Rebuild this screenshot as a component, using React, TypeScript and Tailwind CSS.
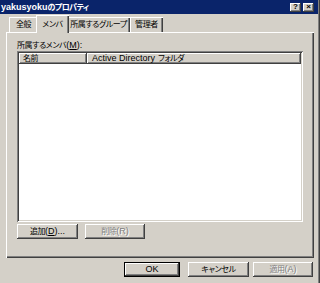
import React from "react";

const raised =
  "shadow-[inset_-1px_-1px_#404040,inset_1px_1px_#ffffff,inset_-2px_-2px_#808080]";

function J({ children, c = "" }: { children: React.ReactNode; c?: string }) {
  return <span className={`text-[8px] tracking-[-0.4px] ${c}`}>{children}</span>;
}

function Btn({ children, disabled, def, w }: { children: React.ReactNode; disabled?: boolean; def?: boolean; w: string }) {
  return (
    <div
      className={`${w} h-[15px] flex items-center justify-center bg-[#d4d0c8] ${
        def
          ? "shadow-[inset_0_0_0_1px_#000000,inset_-2px_-2px_#404040,inset_2px_2px_#ffffff,inset_-3px_-3px_#808080]"
          : raised
      } ${disabled ? "text-[#808080] [text-shadow:1px_1px_0_#ffffff]" : "text-black"}`}
    >
      <span className="leading-none whitespace-nowrap">{children}</span>
    </div>
  );
}

function Tab({ label, active, w }: { label: string; active?: boolean; w: string }) {
  return (
    <div
      className={`${w} flex items-center justify-center bg-[#d4d0c8] whitespace-nowrap ${
        active
          ? "h-[18px] -mx-[2px] z-10 relative shadow-[inset_1px_1px_#ffffff,inset_-1px_0_#404040,inset_-2px_0_#808080] mb-[-1px]"
          : "h-[15px] shadow-[inset_1px_1px_#ffffff,inset_-1px_0_#404040,inset_-2px_0_#808080]"
      }`}
    >
      <span className="leading-none">
        <J>{label}</J>
      </span>
    </div>
  );
}

export default function App() {
  return (
    <div
      className="w-[320px] h-[283px] bg-[#d4d0c8] flex flex-col overflow-hidden text-[9px] text-black shadow-[inset_-1px_0_#404040,inset_-2px_0_#808080] [font-feature-settings:'palt']"
      style={{ fontFamily: '"Liberation Sans", "Noto Sans CJK JP", sans-serif' }}
    >
      {/* title bar */}
      <div className="h-[14px] bg-[#0a246a] flex items-center justify-between pl-[1px] pr-[4px] mr-[2px]">
        <span className="text-white font-bold text-[9px] leading-none whitespace-nowrap">
          yakusyoku<span className="text-[8px] tracking-[-0.6px]">のプロパティ</span>
        </span>
        <div className="flex gap-[2px]">
          <div className={`w-[11px] h-[9px] bg-[#d4d0c8] ${raised} flex items-center justify-center text-[8px] font-bold leading-none`}>?</div>
          <div className={`w-[11px] h-[9px] bg-[#d4d0c8] ${raised} flex items-center justify-center text-[8px] font-bold leading-none`}>×</div>
        </div>
      </div>

      {/* tabs */}
      <div className="flex items-end pl-[9px] mt-[3px] h-[15px]">
        <Tab label="全般" w="w-[29px]" />
        <Tab label="メンバ" active w="w-[33px]" />
        <Tab label="所属するグループ" w="w-[63px]" />
        <Tab label="管理者" w="w-[33px]" />
      </div>

      {/* panel */}
      <div className="ml-[6px] mr-[6px] h-[226px] flex flex-col px-[11px] pt-[9px] shadow-[inset_1px_1px_#ffffff,inset_-1px_-1px_#404040,inset_-2px_-2px_#808080]">
        <div className="h-[9px] flex items-center leading-none whitespace-nowrap">
          <J>所属するメンバ</J>(<span className="underline">M</span>):
        </div>
        <div className="mt-[1px] h-[171px] bg-white flex flex-col p-[2px] shadow-[inset_1px_1px_#808080,inset_-1px_-1px_#ffffff,inset_2px_2px_#404040,inset_-2px_-2px_#d4d0c8]">
          <div className="flex h-[11px]">
            <div className={`w-[68px] h-full bg-[#d4d0c8] ${raised} flex items-center pl-[4px] leading-none`}>
              <J>名前</J>
            </div>
            <div className={`flex-1 h-full bg-[#d4d0c8] ${raised} flex items-center pl-[5px] leading-none whitespace-nowrap`}>
              <span>Active Directory</span>
              <J c="ml-[3px]">フォルダ</J>
            </div>
          </div>
          <div className="flex-1" />
        </div>
        <div className="flex gap-[7px] mt-[2px]">
          <Btn w="w-[61px]">
            <J>追加</J>(<span className="underline">D</span>)...
          </Btn>
          <Btn w="w-[60px]" disabled>
            <J>削除</J>(R)
          </Btn>
        </div>
      </div>

      {/* bottom buttons */}
      <div className="flex mt-[4px] pl-[124px]">
        <Btn w="w-[56px]" def>OK</Btn>
        <div className="w-[8px]" />
        <Btn w="w-[61px]">
          <J>キャンセル</J>
        </Btn>
        <div className="w-[4px]" />
        <Btn w="w-[60px]" disabled>
          <J>適用</J>(A)
        </Btn>
      </div>
    </div>
  );
}
